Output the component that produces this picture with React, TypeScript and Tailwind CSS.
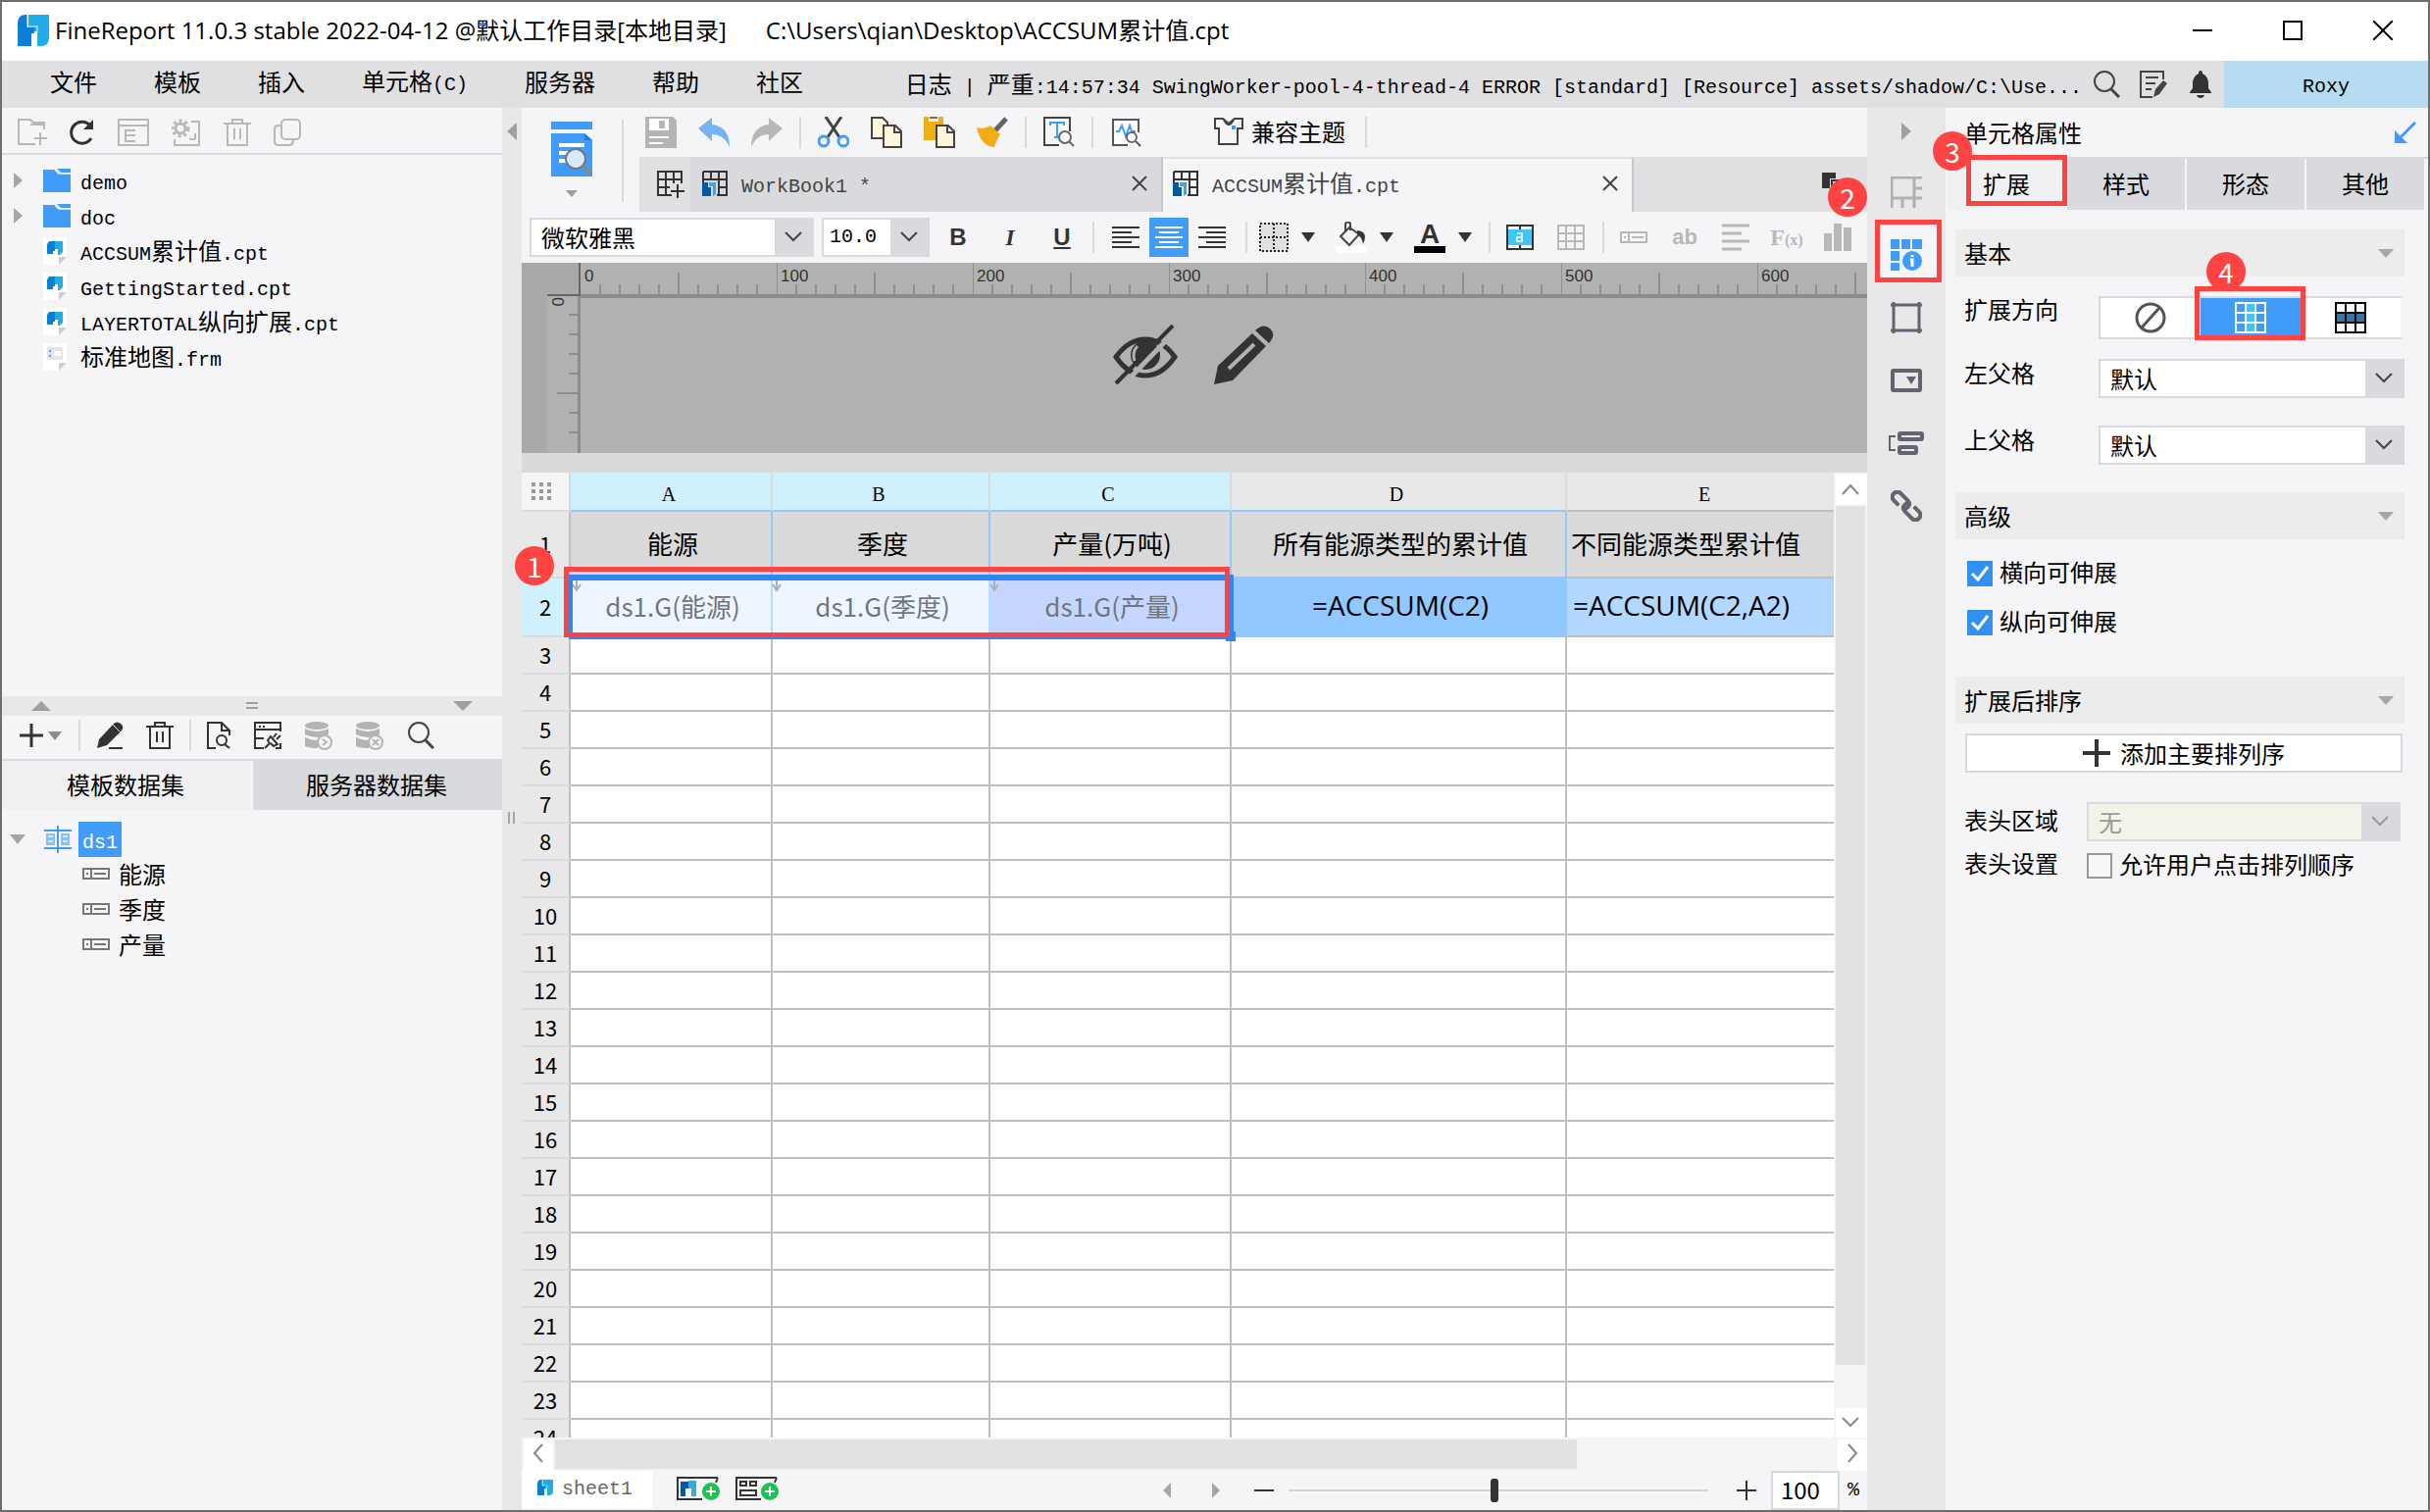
import { ReactNode } from 'react'
import clsx from 'clsx'

type IconProps = { w?: number; h?: number; children?: ReactNode; className?: string }

function Icon({ w = 32, h = 32, children, className }: IconProps) {
  return (
    <svg width={w} height={h} viewBox={`0 0 ${w} ${h}`} fill="none" className={clsx('shrink-0', className)} aria-hidden="true">
      {children}
    </svg>
  )
}

// Latin runs use a half-width monospace next to full-width Chinese
function Mixed({ text }: { text: string }) {
  return (
    <span className="whitespace-pre">
      {text.split(/([\x20-\x7e]+)/).filter(Boolean).map((part, i) =>
        /^[\x20-\x7e]/.test(part) ? (
          <span key={i} className="font-['Liberation_Mono',monospace] text-xl leading-none">{part}</span>
        ) : (
          <span key={i}>{part}</span>
        )
      )}
    </span>
  )
}

function Caret({ className = 'text-[#333]', dir = 'down', w = 14, h = 10 }: { className?: string; dir?: string; w?: number; h?: number }) {
  const points: Record<string, string> = {
    down: `0,0 ${w},0 ${w / 2},${h}`,
    up: `0,${h} ${w},${h} ${w / 2},0`,
    left: `${w},0 ${w},${h} 0,${h / 2}`,
    right: `0,0 0,${h} ${w},${h / 2}`,
  }
  return (
    <Icon w={w} h={h} className={className}>
      <polygon points={points[dir]} fill="currentColor" />
    </Icon>
  )
}

function Chevron({ dir = 'down', className = 'text-[#555]' }: { dir?: string; className?: string }) {
  const d: Record<string, string> = {
    down: 'M2 5L10 13L18 5',
    up: 'M2 15L10 6L18 15',
    left: 'M14 1L6 10L14 19',
    right: 'M6 1L14 10L6 19',
  }
  return (
    <Icon w={20} h={20} className={className}>
      <path d={d[dir]} stroke="currentColor" strokeWidth="2" />
    </Icon>
  )
}

function Sep({ className = 'mx-[17px]' }: { className?: string }) {
  return <span className={clsx('h-8 w-[2px] shrink-0 bg-[#dadadd]', className)} />
}

function Badge({ n, className }: { n: number; className: string }) {
  return (
    <span className={clsx('absolute z-20 flex size-10 items-center justify-center rounded-full bg-[#ff4343] text-[28px] leading-none text-white', className)}>
      {n}
    </span>
  )
}

function Logo({ size = 32 }: { size?: number }) {
  return (
    <svg width={size} height={size} viewBox="0 0 32 32" className="shrink-0" aria-hidden="true">
      <path d="M11 0H32V23Q32 32 24 32H20V17H11Z" fill="#22ace6" />
      <path d="M0 9Q0 0 8 0H10V13H17V19H14V32H0Z" fill="#0b7fd6" />
      <path d="M10 0V12H20V18" stroke="#fff" strokeOpacity="0.6" strokeWidth="1.5" fill="none" />
      <path d="M14 20H20V32H14Z" fill="#fff" />
    </svg>
  )
}

function FolderIcon() {
  return (
    <Icon w={28} h={24}>
      <path d="M0 1H12L15 5H28V24H0Z" fill="#419bf9" />
      <path d="M14 0H28V4H18Z" fill="#419bf9" />
      <path d="M12 1L16 5H28" stroke="#e7f1fd" strokeWidth="1.5" />
    </Icon>
  )
}

function FileIcon({ kind }: { kind: 'cpt' | 'frm' }) {
  return (
    <Icon w={24} h={28}>
      <path d="M0 0H24V20L16 28H0Z" fill="#fff" />
      <path d="M16 28V20H24Z" fill="#cfcfd2" />
      {kind === 'cpt' ? (
        <>
          <path d="M6 4H12V17H4V7Z" fill="#0b7fd6" />
          <path d="M12 4H20V15L17 18H15V12H12Z" fill="#22ace6" />
          <path d="M10 14H13V18H10Z" fill="#fff" />
        </>
      ) : (
        <>
          <rect x="4" y="4" width="16" height="13" fill="#e4e4e6" />
          <path d="M7 7V14" stroke="#419bf9" strokeWidth="2" strokeDasharray="2 3 6" />
          <path d="M11 8H18V13H11Z" fill="#fff" />
        </>
      )}
    </Icon>
  )
}

function FieldIcon({ className = 'text-[#777]' }: { className?: string }) {
  return (
    <Icon w={28} h={12} className={className}>
      <rect x="1" y="1" width="26" height="10" stroke="currentColor" strokeWidth="2" />
      <path d="M9 1V11M12 6H24" stroke="currentColor" strokeWidth="2" />
      <rect x="4" y="5" width="2" height="2" fill="currentColor" />
    </Icon>
  )
}

function TemplateTabIcon() {
  return (
    <Icon w={26} h={26}>
      <path d="M1 1H25V25H15M1 9H25M1 1V12M9 1V9M17 1V25M17 17H25" stroke="#333" strokeWidth="2" />
      <path d="M0 12H6V17H9V26H0Z" fill="#0557a5" />
      <path d="M7 12H14V24L11 26V16H7Z" fill="#36a9e1" />
    </Icon>
  )
}

function SearchIcon() {
  return (
    <Icon w={28} h={28}>
      <circle cx="12" cy="11" r="10" stroke="#444" strokeWidth="2" />
      <path d="M19 19L27 27" stroke="#444" strokeWidth="3" />
    </Icon>
  )
}

function DbIcon({ mark }: { mark: string }) {
  return (
    <Icon w={28} h={30}>
      <ellipse cx="12" cy="5" rx="12" ry="4" fill="#b4b4b4" />
      <path d="M0 8Q12 14 24 8V14Q12 20 0 14ZM0 17Q8 21 15 20L13 28Q4 28 0 26Z" fill="#b4b4b4" />
      <circle cx="20" cy="22" r="7" fill="#f5f5f7" stroke="#b4b4b4" strokeWidth="2" />
      <path d={mark} stroke="#b4b4b4" strokeWidth="2" />
    </Icon>
  )
}

function PencilIcon() {
  return (
    <Icon w={28} h={28}>
      <path d="M0 27L2 18L17 2Q20 -1 24 2T25 9L10 24Z" fill="#333" />
      <path d="M16 3L23 10" stroke="#f5f5f7" strokeWidth="1" />
      <path d="M12 27H26" stroke="#333" strokeWidth="2" />
    </Icon>
  )
}

function TrashIcon({ color = '#333' }: { color?: string }) {
  return (
    <Icon w={28} h={28}>
      <path d="M0 5H28M9 5V1H19V5M4 5V27H24V5M11 10V21M17 10V21" stroke={color} strokeWidth="2" />
    </Icon>
  )
}

function GridIcon({ line, fill, vertical }: { line: string; fill: string; vertical?: boolean }) {
  return (
    <Icon>
      {vertical ? <rect x="11" width="10" height="32" fill={fill} /> : <rect y="11" width="32" height="10" fill={fill} />}
      <path d="M1 1H31V31H1ZM11 1V31M21 1V31M1 11H31M1 21H31" stroke={line} strokeWidth="2" />
    </Icon>
  )
}

function TitleBar() {
  return (
    <header className="flex h-[60px] shrink-0 items-center bg-white pb-[2px] pl-4 font-['Open_Sans','Noto_Sans_CJK_SC',sans-serif]">
      <Logo />
      <h1 className="ml-[6px] text-2xl leading-8">FineReport 11.0.3 stable 2022-04-12 @默认工作目录[本地目录]</h1>
      <span className="ml-10 text-2xl leading-8">C:\Users\qian\Desktop\ACCSUM累计值.cpt</span>
      <div className="ml-auto flex h-full">
        <button aria-label="最小化" className="flex w-[92px] items-center justify-center">
          <Icon w={20} h={20}><path d="M0 10H20" stroke="#000" strokeWidth="2" /></Icon>
        </button>
        <button aria-label="最大化" className="flex w-[92px] items-center justify-center">
          <Icon w={20} h={20}><rect x="1" y="1" width="18" height="18" stroke="#000" strokeWidth="2" /></Icon>
        </button>
        <button aria-label="关闭" className="flex w-[92px] items-center justify-center">
          <Icon w={20} h={20}><path d="M0 0L20 20M20 0L0 20" stroke="#000" strokeWidth="2" /></Icon>
        </button>
      </div>
    </header>
  )
}

const menus = ['文件', '模板', '插入', '单元格(C)', '服务器', '帮助', '社区']

function MenuBar() {
  return (
    <nav className="flex h-12 shrink-0 items-center bg-[#e0e0e2] pl-5">
      {menus.map((item) => (
        <button key={item} className="shrink-0 px-[29px] pb-[6px] text-2xl leading-none"><Mixed text={item} /></button>
      ))}
      <div className="ml-auto min-w-0 overflow-hidden pb-[2px] text-2xl leading-10">
        <Mixed text="日志 | 严重:14:57:34 SwingWorker-pool-4-thread-4 ERROR [standard] [Resource] assets/shadow/C:\Use..." />
      </div>
      <div className="ml-[11px] mr-[10px] flex shrink-0 gap-5">
        <button aria-label="搜索"><SearchIcon /></button>
        <button aria-label="日志">
          <Icon w={28} h={28}>
            <path d="M24 9V1H1V27H13M6 7H19M6 13H16M6 19H12" stroke="#444" strokeWidth="2" />
            <path d="M14 27L16 19L24 10L28 13L20 24Z" fill="#444" />
          </Icon>
        </button>
        <button aria-label="通知">
          <Icon w={28} h={28}>
            <path d="M14 0Q16 0 16 3Q22 6 22 13V18L25 22V23H3V22L6 18V13Q6 6 12 3Q12 0 14 0ZM10 25H18Q17 28 14 28T10 25Z" fill="#333" />
          </Icon>
        </button>
      </div>
      <button className="h-full w-[208px] shrink-0 bg-[#b7dcf2] pb-1 text-2xl"><Mixed text="Roxy" /></button>
    </nav>
  )
}

const files = [
  { name: 'demo', kind: 'folder' },
  { name: 'doc', kind: 'folder' },
  { name: 'ACCSUM累计值.cpt', kind: 'cpt' },
  { name: 'GettingStarted.cpt', kind: 'cpt' },
  { name: 'LAYERTOTAL纵向扩展.cpt', kind: 'cpt' },
  { name: '标准地图.frm', kind: 'frm' },
]

function FilePanel() {
  const gray = '#b8b8b8'
  return (
    <section className="flex h-[600px] shrink-0 flex-col">
      <div className="flex h-12 shrink-0 items-center gap-[23px] border-b-2 border-[#d9dadd] pl-4 pt-1">
        <button aria-label="新建文件夹">
          <Icon w={30} h={28}><path d="M27 11V4H16L13 1H1V26H18M23 14V27M17 20H30M13 6H27" stroke={gray} strokeWidth="2" /></Icon>
        </button>
        <button aria-label="刷新">
          <Icon w={26} h={28}><path d="M21 7A11 11 0 1 0 22 20" stroke="#333" strokeWidth="3" /><path d="M24 1V11H14Z" fill="#333" /></Icon>
        </button>
        <button aria-label="在文件夹中查看">
          <Icon w={32} h={28}><path d="M1 1H31V27H1ZM1 7H31M8 11V23H18M8 12H18M8 17H18" stroke={gray} strokeWidth="2" /></Icon>
        </button>
        <button aria-label="权限">
          <Icon w={30} h={28}>
            <circle cx="9" cy="10" r="5" stroke={gray} strokeWidth="3" />
            <circle cx="9" cy="10" r="8" stroke={gray} strokeWidth="3" strokeDasharray="3 3" />
            <path d="M20 3H28V27H3V21M18 21H24M24 15V21" stroke={gray} strokeWidth="2" />
          </Icon>
        </button>
        <button aria-label="删除"><TrashIcon color={gray} /></button>
        <button aria-label="复制">
          <Icon w={28} h={28}>
            <rect x="8" y="1" width="19" height="20" rx="4" stroke={gray} strokeWidth="2" />
            <path d="M8 7H5Q1 7 1 11V23Q1 27 5 27H16Q20 27 20 22" stroke={gray} strokeWidth="2" />
          </Icon>
        </button>
      </div>
      <ul className="pt-2">
        {files.map((file) => (
          <li key={file.name} className="flex h-9 items-center pl-3 text-2xl leading-none">
            <span className="w-[30px]">{file.kind === 'folder' && <Caret dir="right" w={9} h={16} className="text-[#a6a6a6]" />}</span>
            <span className="flex w-[38px] justify-start">
              {file.kind === 'folder' ? <FolderIcon /> : <FileIcon kind={file.kind as 'cpt' | 'frm'} />}
            </span>
            <Mixed text={file.name} />
          </li>
        ))}
      </ul>
    </section>
  )
}

function DatasetPanel() {
  return (
    <section className="flex min-h-0 flex-1 flex-col">
      <div className="flex h-5 shrink-0 items-center justify-between bg-[#e8e8e8] px-[30px] text-[#a0a0a0]">
        <Caret dir="up" w={20} h={10} className="" />
        <Icon w={12} h={8}><path d="M0 1H12M0 6H12" stroke="#a0a0a0" strokeWidth="2" /></Icon>
        <Caret w={20} h={10} className="" />
      </div>
      <div className="flex h-[44px] shrink-0 items-center pb-1 pl-[18px]">
        <button aria-label="添加数据集" className="flex items-center gap-[5px]">
          <Icon w={24} h={28}><path d="M12 2V26M0 14H24" stroke="#333" strokeWidth="3" /></Icon>
          <Caret className="text-[#8c8c8c]" h={9} />
        </button>
        <Sep />
        <div className="flex gap-[22px]">
          <button aria-label="编辑"><PencilIcon /></button>
          <button aria-label="删除"><TrashIcon /></button>
        </div>
        <Sep className="mx-4" />
        <div className="flex items-center gap-6">
          <button aria-label="预览">
            <Icon w={24} h={28}>
              <path d="M9 27H1V1H15L23 9V14M15 1V9H23" stroke="#333" strokeWidth="2" />
              <circle cx="15" cy="19" r="5" stroke="#333" strokeWidth="2" />
              <path d="M18 23L23 27" stroke="#333" strokeWidth="2" />
            </Icon>
          </button>
          <button aria-label="SQL">
            <Icon w={28} h={28}>
              <path d="M27 10V1H1V27H10M1 8H27M1 17H10M5 5H7M9 5H11" stroke="#333" strokeWidth="2" />
              <path d="M11 27L16 22L14 19L17 15L24 23L20 25L17 22M20 16L23 12M23 18L27 14M22 27H27V22" stroke="#333" strokeWidth="2" />
            </Icon>
          </button>
          <button aria-label="缓存"><DbIcon mark="M18 19L22 22L18 25" /></button>
          <button aria-label="清除缓存"><DbIcon mark="M17 19L23 25M23 19L17 25" /></button>
          <button aria-label="搜索"><SearchIcon /></button>
        </div>
      </div>
      <div className="grid h-[52px] shrink-0 grid-cols-2 gap-[2px] border-t-2 border-[#d9dadd] text-2xl leading-none">
        <button className="bg-[#f0f0f2] pb-[2px] pr-[2px]">模板数据集</button>
        <button className="bg-[#d9dadd] pb-[2px] pr-[2px]">服务器数据集</button>
      </div>
      <ul className="pt-3 text-2xl leading-none">
        <li className="flex h-9 items-center pl-2">
          <Caret className="text-[#a6a6a6]" w={16} />
          <Icon w={28} h={28} className="ml-[19px]">
            <path d="M0 5H28M0 23H28M14 0V28" stroke="#419bf9" strokeWidth="2" />
            <path d="M2 8H11V20H2ZM17 8H26V20H17Z" fill="#419bf9" fillOpacity="0.6" />
            <path d="M4 11H9M4 16H9M19 11H24M19 16H24" stroke="#d7eafe" strokeWidth="2" />
          </Icon>
          <span className="ml-[7px] flex h-9 items-center bg-[#419bf9] px-1 text-white"><Mixed text="ds1" /></span>
        </li>
        {['能源', '季度', '产量'].map((field) => (
          <li key={field} className="flex h-9 items-center gap-[9px] pb-[2px] pl-[82px]">
            <FieldIcon />
            {field}
          </li>
        ))}
      </ul>
    </section>
  )
}

function QuickToolbar() {
  return (
    <div className="flex h-[50px] items-center pl-[6px]">
      <div className="flex gap-[22px]">
        <button aria-label="保存">
          <Icon>
            <path d="M0 0H28L32 4V32H0Z" fill="#b4b4b6" />
            <path d="M4 2H24V14H4ZM4 20H24V22H4ZM4 26H18V28H4Z" fill="#fff" />
            <rect x="14" y="4" width="6" height="8" fill="#b4b4b6" />
          </Icon>
        </button>
        <button aria-label="撤销">
          <Icon><path d="M0 12L14 1V8Q32 10 32 31Q26 18 14 18V25Z" fill="#77b3f2" /></Icon>
        </button>
        <button aria-label="重做">
          <Icon><path d="M32 12L18 1V8Q0 10 0 31Q6 18 18 18V25Z" fill="#b8b8ba" /></Icon>
        </button>
      </div>
      <Sep />
      <div className="flex gap-[22px]">
        <button aria-label="剪切">
          <Icon>
            <path d="M8 0L22 21M24 0L10 21" stroke="#444" strokeWidth="3" />
            <circle cx="6" cy="25" r="5" stroke="#419bf9" strokeWidth="3" />
            <circle cx="26" cy="25" r="5" stroke="#419bf9" strokeWidth="3" />
          </Icon>
        </button>
        <button aria-label="复制">
          <Icon>
            <path d="M1 1H12L17 6V22H1Z" fill="#fff4dc" stroke="#444" strokeWidth="2" />
            <path d="M13 9H25L31 15V31H13Z" fill="#fff4dc" stroke="#444" strokeWidth="2" />
            <path d="M24 9V16H31" stroke="#444" strokeWidth="2" />
          </Icon>
        </button>
        <button aria-label="粘贴">
          <Icon>
            <path d="M0 0H20V24H0Z" fill="#f0ad15" />
            <path d="M5 0H15V5H5Z" fill="#fff" />
            <path d="M6 0H14V2H6Z" fill="#c65a11" />
            <path d="M13 9H25L31 15V31H13Z" fill="#fff4dc" stroke="#444" strokeWidth="2" />
            <path d="M24 9V16H31" stroke="#444" strokeWidth="2" />
          </Icon>
        </button>
        <button aria-label="格式刷">
          <Icon>
            <path d="M30 2L19 14" stroke="#5f6270" strokeWidth="5" />
            <path d="M0 11Q8 13 14 9L24 18Q20 24 18 31Q4 30 0 11Z" fill="#f0ad15" />
          </Icon>
        </button>
      </div>
      <Sep />
      <button aria-label="全文检索">
        <Icon>
          <path d="M16 29H1V1H27V15" stroke="#444" strokeWidth="2" />
          <path d="M7 9V6H21V9M14 6V21M11 21H17" stroke="#419bf9" strokeWidth="2" />
          <circle cx="22" cy="21" r="6" stroke="#666" strokeWidth="2" />
          <path d="M26 25L31 30" stroke="#666" strokeWidth="2" />
        </Icon>
      </button>
      <Sep />
      <button aria-label="性能分析">
        <Icon>
          <path d="M3 3H29V29H3Z" fill="#fff" />
          <path d="M18 29H3V3H29V16" stroke="#555" strokeWidth="2" />
          <path d="M6 15H9L12 9L16 20L20 9L22 15H26" stroke="#419bf9" strokeWidth="2" />
          <circle cx="22" cy="21" r="5" fill="#fff" stroke="#666" strokeWidth="2" />
          <path d="M26 25L31 30" stroke="#555" strokeWidth="2" />
        </Icon>
      </button>
      <button className="ml-[74px] flex items-center gap-2 pb-[2px] text-2xl leading-none">
        <Icon w={30} h={28}>
          <path d="M1 1H9L15 6L21 1H29V11H24V27H5V11H1Z" stroke="#444" strokeWidth="2" />
          <path d="M10 2Q15 12 20 2" stroke="#444" strokeWidth="2" />
          <rect x="18" y="8" width="4" height="4" fill="#419bf9" />
        </Icon>
        兼容主题
      </button>
      <Sep className="ml-5" />
    </div>
  )
}

function CloseIcon() {
  return (
    <Icon w={16} h={16}><path d="M1 1L15 15M15 1L1 15" stroke="#444" strokeWidth="2" /></Icon>
  )
}

function TemplateTabs() {
  return (
    <div className="relative flex h-14 bg-[#e0e0e2] text-2xl leading-none text-[#444]">
      <button aria-label="新建模板" className="flex w-[52px] shrink-0 items-center justify-end pr-[6px]">
        <Icon w={28} h={28}>
          <path d="M15 25H1V1H25V13M1 9H25M1 17H13M9 1V25M17 1V13M21 14V28M14 21H28" stroke="#333" strokeWidth="2" />
        </Icon>
      </button>
      <div className="flex w-[482px] items-center border-r-2 border-[#c6c7ca] bg-[#d9dadd] pb-[2px] pl-3 pr-[14px]">
        <button className="flex items-center gap-[14px]"><TemplateTabIcon /><Mixed text="WorkBook1 *" /></button>
        <button aria-label="关闭 WorkBook1" className="ml-auto"><CloseIcon /></button>
      </div>
      <div className="flex w-[480px] items-center border-r-2 border-t-2 border-[#c6c7ca] border-t-[#e0e0e2] bg-[#f5f5f7] pb-1 pl-[10px] pr-[14px]">
        <button className="flex items-center gap-[14px]"><TemplateTabIcon /><Mixed text="ACCSUM累计值.cpt" /></button>
        <button aria-label="关闭 ACCSUM" className="ml-auto"><CloseIcon /></button>
      </div>
      <button aria-label="窗口列表" className="ml-auto mr-[22px]">
        <Icon w={24} h={24}><path d="M0 0H14V6H8V16H0Z" fill="#333" /><path d="M10 8H24V24H10Z" stroke="#333" strokeWidth="2" /></Icon>
      </button>
      <Badge n={2} className="right-0 top-[21px]" />
    </div>
  )
}

type ComboProps = { id: string; label: string; value: string; className: string; disabled?: boolean; mono?: boolean }

function Combo({ id, label, value, className, disabled, mono }: ComboProps) {
  return (
    <div className={clsx('flex h-10 shrink-0 border-2 border-[#d9dadd] leading-none', disabled ? 'bg-[#f3f3ea]' : 'bg-white', className)}>
      <select
        id={id}
        aria-label={label}
        disabled={disabled}
        className={clsx(
          'min-w-0 flex-1 appearance-none bg-transparent',
          mono ? "pl-[6px] font-['Liberation_Mono',monospace] text-xl" : 'pl-[10px] text-2xl leading-none',
          disabled ? 'text-[#999]' : 'text-black'
        )}
      >
        <option>{value}</option>
      </select>
      <span className="flex w-[38px] items-center justify-center bg-[#d9dadd]">
        <Chevron className={disabled ? 'text-[#999]' : 'text-[#444]'} />
      </span>
    </div>
  )
}

function FormatBar() {
  return (
    <div className="flex h-[52px] shrink-0 items-center bg-[#f5f5f7] pl-2">
      <Combo id="font-family" label="字体" value="微软雅黑" className="w-[290px]" />
      <Combo id="font-size" label="字号" value="10.0" mono className="ml-2 w-[110px]" />
      <div className="ml-[13px] flex gap-[21px] text-2xl leading-none text-[#333]">
        <button className="w-8 font-['Liberation_Sans',sans-serif] font-bold">B</button>
        <button className="w-8 font-['Liberation_Serif',serif] font-bold italic">I</button>
        <button className="w-8 font-['Liberation_Sans',sans-serif] font-bold underline">U</button>
      </div>
      <Sep className="ml-[15px] mr-3" />
      <div className="flex gap-1">
        <button aria-label="左对齐" className="flex size-10 items-center justify-center">
          <Icon w={28} h={22}><path d="M0 1H28M0 6H20M0 11H28M0 16H20M0 21H28" stroke="#333" strokeWidth="2" /></Icon>
        </button>
        <button aria-label="居中" className="flex size-10 items-center justify-center bg-[#419bf9]">
          <Icon w={28} h={22}><path d="M0 1H28M4 6H24M0 11H28M4 16H24M0 21H28" stroke="#fff" strokeWidth="2" /></Icon>
        </button>
        <button aria-label="右对齐" className="flex size-10 items-center justify-center">
          <Icon w={28} h={22}><path d="M0 1H28M8 6H28M0 11H28M8 16H28M0 21H28" stroke="#333" strokeWidth="2" /></Icon>
        </button>
      </div>
      <Sep className="ml-[14px] mr-3" />
      <div className="flex gap-[21px]">
        <button aria-label="边框" className="flex items-center gap-[13px]">
          <Icon w={30} h={30}>
            <rect width="30" height="30" fill="#e0e0e2" />
            <path d="M1 1H29V29H1ZM15 1V29M1 15H29" stroke="#222" strokeWidth="2" strokeDasharray="2 2" />
          </Icon>
          <Caret />
        </button>
        <button aria-label="背景" className="flex items-center gap-[13px]">
          <Icon>
            <path d="M5 15L14 6L24 13L14 24Z" stroke="#444" strokeWidth="2" />
            <path d="M10 10V2Q13 -1 15 2V9" stroke="#444" strokeWidth="2" />
            <path d="M22 9Q34 10 28 23Q27 16 22 13Z" fill="#333" />
            <rect y="25" width="32" height="7" fill="#fff" />
          </Icon>
          <Caret />
        </button>
        <button aria-label="文字颜色" className="flex items-center gap-[13px]">
          <span className="flex w-8 flex-col items-center font-['Liberation_Sans',sans-serif] text-[28px] font-bold leading-6 text-[#333]">
            A
            <span className="h-[7px] w-8 bg-black" />
          </span>
          <Caret />
        </button>
      </div>
      <Sep className="ml-[17px] mr-4" />
      <div className="flex gap-6">
        <button aria-label="合并单元格">
          <Icon w={28} h={26}>
            <path d="M1 1H27V25H1ZM14 1V5M14 21V25" stroke="#333" strokeWidth="2" />
            <rect x="2" y="5" width="24" height="16" fill="#3fc4fb" />
            <path d="M11 9H16V17M17 17H11V13H16" stroke="#d9f3ff" strokeWidth="2" />
          </Icon>
        </button>
        <button aria-label="拆分单元格">
          <Icon w={28} h={26}><path d="M1 1H27V25H1ZM9 1V25M18 1V25M1 9H27M1 17H27" stroke="#b8b8ba" strokeWidth="2" /></Icon>
        </button>
      </div>
      <Sep className="ml-[18px] mr-4" />
      <div className="flex items-center gap-6 text-[#b8b8ba]">
        <button aria-label="数据列"><FieldIcon className="text-[#b8b8ba]" /></button>
        <button className="w-7 font-['Liberation_Sans',sans-serif] text-[22px] font-bold leading-none">ab</button>
        <button aria-label="富文本">
          <Icon w={28} h={28}><path d="M0 2H28M0 10H20M0 18H28M0 26H20" stroke="currentColor" strokeWidth="3" /></Icon>
        </button>
        <button className="flex w-7 items-baseline justify-center font-['Liberation_Serif',serif] text-2xl font-bold leading-none">
          F<span className="text-base leading-none">(x)</span>
        </button>
        <button aria-label="图表">
          <Icon w={28} h={28}><path d="M0 10H8V28H0ZM10 0H18V28H10ZM20 4H28V28H20Z" fill="currentColor" /></Icon>
        </button>
      </div>
    </div>
  )
}

const rulerMarks = [0, 100, 200, 300, 400, 500, 600]
const minorTicks = [20, 40, 60, 80, 120, 140, 160, 180]

function ParameterPane() {
  return (
    <div className="flex h-[194px] shrink-0 bg-[#b1b1b1] font-['Liberation_Sans',sans-serif] text-base leading-none text-[#444]">
      <div className="w-[26px] shrink-0 bg-[#a9a9a9]" />
      <div className="flex w-[34px] shrink-0 flex-col">
        <div className="h-[34px] border-b-2 border-r-2 border-[#666] bg-[#a9a9a9]" />
        <div className="flex-1 border-r-[3px] border-[#8c8c8c]">
          <svg width="31" height="160" viewBox="0 0 31 160" aria-hidden="true">
            <path d="M22 19H31M22 39H31M22 59H31M22 79H31M10 99H31M22 119H31M22 139H31" stroke="#8f8f8f" strokeWidth="2" />
            <text x="0" y="0" transform="translate(5 1) rotate(90)" fontSize="17" fill="#333">0</text>
          </svg>
        </div>
      </div>
      <div className="flex min-w-0 flex-1 flex-col">
        <div className="flex h-9 overflow-hidden border-b-4 border-[#8c8c8c]">
          {rulerMarks.map((mark) => (
            <svg key={mark} width="200" height="32" viewBox="0 0 200 32" className="shrink-0" aria-hidden="true">
              {mark > 0 && <path d="M0 0V32" stroke="#8f8f8f" strokeWidth="2" />}
              <path d={`M100 10V32${minorTicks.map((x) => `M${x} 22V32`).join('')}`} stroke="#8f8f8f" strokeWidth="2" />
              <text x="4" y="19" fontSize="17" fill="#333">{mark}</text>
            </svg>
          ))}
        </div>
        <div className="flex justify-center gap-9 pr-[62px] pt-[27px]">
          <button aria-label="隐藏参数面板">
            <Icon w={66} h={62}>
              <path d="M3 33Q16 15 33 15T63 33Q50 52 33 52T3 33Z" stroke="#333" strokeWidth="5" />
              <circle cx="33" cy="31" r="15" fill="#333" />
              <path d="M25 22Q19 28 22 37" stroke="#b1b1b1" strokeWidth="3" />
              <path d="M65 5L9 63" stroke="#b1b1b1" strokeWidth="5" />
              <path d="M61 1L3 60" stroke="#333" strokeWidth="4" />
            </Icon>
          </button>
          <button aria-label="编辑参数面板">
            <Icon w={62} h={62}>
              <path d="M1 61L5 42L40 9L54 22L20 57Z" fill="#333" />
              <path d="M43 6Q51 -2 58 4T57 19Z" fill="#333" />
              <path d="M16 45L42 20" stroke="#b1b1b1" strokeWidth="4" />
            </Icon>
          </button>
        </div>
      </div>
    </div>
  )
}

const columns = ['A', 'B', 'C', 'D', 'E']
const blankRows = Array.from({ length: 22 }, (_, i) => i + 3)
const line = 'border-b-2 border-r-2 border-[#bfbfbf] last:border-r-0'
const picked = 'border-b-2 border-r-2 border-[#94c8fd]'
const rowHead = 'border-b-2 border-r-2 border-b-[#d9dadd] border-r-[#bfbfbf] p-0 pb-[2px] text-center align-middle text-[22px] font-normal leading-none'

function ReportGrid() {
  return (
    <div className="relative min-h-0 min-w-0 flex-1 bg-white">
      <div className="h-full overflow-hidden">
        <table className="w-full table-fixed border-separate border-spacing-0 text-[26px] leading-none">
          <colgroup>
            <col className="w-[50px]" />
            <col className="w-[206px]" />
            <col className="w-[222px]" />
            <col className="w-[246px]" />
            <col className="w-[342px]" />
            <col />
          </colgroup>
          <thead>
            <tr className="h-10">
              <th className="border-b-2 border-r-2 border-[#d9dadd] bg-[#f5f5f7] p-0 pr-2">
                <Icon w={20} h={18} className="mx-auto">
                  <path d="M2 0V4M10 0V4M18 0V4M2 7V11M10 7V11M18 7V11M2 14V18M10 14V18M18 14V18" stroke="#999" strokeWidth="4" />
                </Icon>
              </th>
              {columns.map((col, i) => (
                <th
                  key={col}
                  className={clsx(
                    "border-b-2 border-r-2 border-r-[#d9dadd] p-0 pr-1 pt-[6px] align-middle font-['Liberation_Serif',serif] text-xl font-normal leading-none last:border-r-0 last:pl-2 last:pr-0",
                    i < 3 ? 'bg-[#cff0fc]' : 'bg-[#e8e8e8]',
                    i < 4 ? 'border-b-[#94c8fd]' : 'border-b-[#bfbfbf]'
                  )}
                >
                  {col}
                </th>
              ))}
            </tr>
          </thead>
          <tbody>
            <tr className="h-[68px] bg-[#d9d9d9] text-center">
              <th className={clsx(rowHead, 'bg-[#e8e8e8]')}>1</th>
              <td className={clsx(picked, 'p-0 pb-[2px] pl-1')}>能源</td>
              <td className={clsx(picked, 'p-0 pb-[2px] pl-1')}>季度</td>
              <td className={clsx(picked, 'p-0 pb-[2px] pl-1')}>产量(万吨)</td>
              <td className={clsx(picked, 'p-0 pb-[2px] pl-1')}>所有能源类型的累计值</td>
              <td className={clsx(line, 'p-0 pb-[2px] pl-1 text-left')}>不同能源类型累计值</td>
            </tr>
            <tr className="h-[60px] text-center">
              <th className={clsx(rowHead, 'bg-[#cff0fc]')}>2</th>
              {['能源', '季度', '产量'].map((field) => (
                <td
                  key={field}
                  className={clsx('border-b-2 border-r-2 border-[#b5dcff] p-0 pb-[2px] pl-1 text-[#70757e]', field === '产量' ? 'bg-[#c5d6ff]' : 'bg-[#edf6ff]')}
                >
                  ds1.G({field})
                </td>
              ))}
              <td className="border-b-2 border-r-2 border-[#90c8ff] bg-[#90c8ff] p-0 pb-1 pl-1 font-['Open_Sans',sans-serif] text-[28px] leading-none">=ACCSUM(C2)</td>
              <td className={clsx(line, "bg-[#b3d8ff] p-0 pb-1 pl-[6px] text-left font-['Open_Sans',sans-serif] text-[28px] leading-none")}>=ACCSUM(C2,A2)</td>
            </tr>
            {blankRows.map((n) => (
              <tr key={n} className="h-[38px]">
                <th className={clsx(rowHead, 'bg-[#e8e8e8]')}>{n}</th>
                {columns.map((col) => <td key={col} className={clsx(line, 'p-0')} />)}
              </tr>
            ))}
          </tbody>
        </table>
      </div>
      {/* selected range with its expand arrows and the fill handle */}
      <div className="absolute left-12 top-[104px] h-[66px] w-[678px] border-4 border-t-[6px] border-[#3285f2]">
        <Icon w={460} h={12}>
          <path d="M4 0V10M0 4L4 10L8 4M208 0V10M204 4L208 10L212 4M430 0V10M426 4L430 10L434 4" stroke="#a9b2bb" strokeWidth="2" />
        </Icon>
      </div>
      <span className="absolute left-[718px] top-[162px] size-[10px] bg-[#3285f2]" />
      <div className="absolute left-[43px] top-24 h-[72px] w-[679px] border-[5px] border-[#ff4343]" />
      <Badge n={1} className="-left-[7px] top-[75px]" />
    </div>
  )
}

function BottomBar() {
  return (
    <footer className="flex h-10 shrink-0 items-center bg-[#f5f5f7]">
      <button className="mb-[2px] flex h-[38px] w-[134px] items-center gap-[9px] self-start bg-white pb-1 pl-4 text-[#666]">
        <Logo size={16} />
        <Mixed text="sheet1" />
      </button>
      <div className="ml-6 flex gap-4 pb-1">
        {['sheet', 'block'].map((kind) => (
          <button key={kind} aria-label={kind === 'sheet' ? '添加 sheet' : '添加聚合块'}>
            <Icon w={44} h={24}>
              <path d="M42 1H1V23H26M42 1L40 6" stroke="#333" strokeWidth="2" />
              {kind === 'sheet' ? (
                <>
                  <path d="M4 5H12V12H9V20H4Z" fill="#0557a5" />
                  <path d="M12 4H20V20H15V12H12Z" fill="#36a9e1" />
                </>
              ) : (
                <path d="M5 5H11V9H5ZM15 5H21V9H15ZM5 14H21V19H5Z" stroke="#333" strokeWidth="2" />
              )}
              <circle cx="35" cy="15" r="9" fill="#1fc152" />
              <path d="M35 10V20M30 15H40" stroke="#fff" strokeWidth="2" />
            </Icon>
          </button>
        ))}
      </div>
      <div className="ml-auto flex items-center pr-2">
        <button aria-label="上一页"><Caret dir="left" w={8} h={16} className="text-[#a6a6a6]" /></button>
        <button aria-label="下一页" className="ml-[42px]"><Caret dir="right" w={8} h={16} className="text-[#a6a6a6]" /></button>
        <button aria-label="缩小" className="ml-[35px]"><Icon w={20} h={20}><path d="M0 10H20" stroke="#333" strokeWidth="2" /></Icon></button>
        <input
          type="range"
          aria-label="缩放"
          defaultValue={49}
          className="mx-[15px] h-6 w-[428px] appearance-none bg-[linear-gradient(#d5d5d8,#d5d5d8)] bg-[length:100%_2px] bg-center bg-no-repeat [&::-webkit-slider-thumb]:h-6 [&::-webkit-slider-thumb]:w-2 [&::-webkit-slider-thumb]:appearance-none [&::-webkit-slider-thumb]:rounded-[3px] [&::-webkit-slider-thumb]:bg-[#333]"
        />
        <button aria-label="放大" className="ml-[14px]"><Icon w={20} h={20}><path d="M0 10H20M10 0V20" stroke="#333" strokeWidth="2" /></Icon></button>
        <input aria-label="缩放比例" defaultValue="100" className="ml-[15px] h-10 w-[70px] border-2 border-[#d9dadd] bg-white pb-1 pl-2 text-2xl leading-none" />
        <span className="ml-2 pb-1"><Mixed text="%" /></span>
      </div>
    </footer>
  )
}

function Workspace() {
  return (
    <main className="flex min-w-0 flex-1 flex-col bg-[#f5f5f7]">
      <div className="flex h-[106px] shrink-0">
        <div className="flex w-[104px] shrink-0 py-3">
          <button aria-label="预览" className="ml-[30px] flex w-[42px] flex-col items-center gap-[14px] pt-[2px]">
            <Icon w={42} h={56}>
              <path d="M0 0H42V8H0ZM0 12H34L42 19V56H0Z" fill="#419bf9" />
              <path d="M34 12V19H42Z" fill="#1f7fe0" />
              <path d="M8 24H34M8 32H26M8 40H22" stroke="#fff" strokeWidth="4" />
              <circle cx="25" cy="38" r="10" fill="#d8eafd" stroke="#777" strokeWidth="2" />
              <path d="M32 45L40 53" stroke="#888" strokeWidth="4" />
            </Icon>
            <Caret w={12} h={7} className="text-[#a0a0a0]" />
          </button>
          <span className="ml-auto h-[84px] w-[2px] bg-[#dadadd]" />
        </div>
        <div className="flex min-w-0 flex-1 flex-col pl-4">
          <QuickToolbar />
          <TemplateTabs />
        </div>
      </div>
      <FormatBar />
      <ParameterPane />
      <div className="h-5 shrink-0 bg-[#dadadc]" />
      <div className="flex min-h-0 flex-1">
        <ReportGrid />
        <div className="flex w-[34px] shrink-0 flex-col pl-[2px] pt-[2px]">
          <button aria-label="向上滚动" className="flex h-[30px] items-center justify-center bg-white pr-[2px]"><Chevron dir="up" className="text-[#888]" /></button>
          <div className="mb-11 mr-[2px] mt-[2px] flex-1 bg-[#e1e1e1]" />
          <button aria-label="向下滚动" className="flex h-[30px] items-center justify-center bg-white pr-[2px]"><Chevron className="text-[#888]" /></button>
        </div>
      </div>
      <div className="flex h-[34px] shrink-0 pl-[2px] pt-[2px]">
        <button aria-label="向左滚动" className="flex w-[30px] items-center justify-center bg-white pb-1"><Chevron dir="left" className="text-[#888]" /></button>
        <div className="mb-[2px] ml-[2px] mr-[266px] flex-1 bg-[#e1e1e1]" />
        <button aria-label="向右滚动" className="flex w-[30px] items-center justify-center bg-white pb-1"><Chevron dir="right" className="text-[#888]" /></button>
      </div>
      <BottomBar />
    </main>
  )
}

function SideStrip() {
  const slate = '#62656f'
  const item = 'flex h-16 w-full items-center justify-center'
  return (
    <aside className="w-20 shrink-0 bg-[#e8e8e8]">
      <button aria-label="收起" className="mb-[6px] flex h-12 w-full items-center justify-center">
        <Caret dir="right" w={10} h={18} className="text-[#a0a0a0]" />
      </button>
      <button aria-label="单元格元素" className={item}>
        <Icon><path d="M1 32V1H32M24 2V32M1 22H32M12 22V32M24 12H32" stroke="#b0b0b0" strokeWidth="3" /></Icon>
      </button>
      <button aria-label="单元格属性" className={clsx(item, 'relative')}>
        <span className="absolute -top-1 left-2 flex h-16 w-[68px] border-[5px] border-[#ff4343] bg-[#f5f5f7]" />
        <Icon className="relative">
          <path d="M0 0H9V10H0ZM11 0H20V10H11ZM22 0H32V10H22ZM0 12H9V22H0ZM0 24H9V32H0Z" fill="#419bf9" />
          <circle cx="22" cy="22" r="10" fill="#419bf9" />
          <path d="M22 16V18M20 21H22V28" stroke="#fff" strokeWidth="3" />
        </Icon>
      </button>
      <button aria-label="悬浮元素" className={item}>
        <Icon><path d="M3 0V32M29 0V32M0 3H32M0 29H32" stroke={slate} strokeWidth="3" /></Icon>
      </button>
      <button aria-label="控件设置" className={item}>
        <Icon h={24}>
          <rect x="2" y="2" width="28" height="20" rx="1" stroke={slate} strokeWidth="4" />
          <path d="M16 8H26L21 16Z" fill={slate} />
        </Icon>
      </button>
      <button aria-label="条件属性" className={item}>
        <Icon w={36} h={24}>
          <rect x="11" y="2" width="23" height="6" rx="1" stroke={slate} strokeWidth="4" />
          <rect x="11" y="16" width="17" height="6" rx="1" stroke={slate} strokeWidth="4" />
          <path d="M7 5H1V19H7" stroke={slate} strokeWidth="2" />
        </Icon>
      </button>
      <button aria-label="超级链接" className={item}>
        <Icon>
          <g transform="rotate(45 16 16)" stroke={slate} strokeWidth="4">
            <path d="M10 21H3Q-2 21 -2 16T3 11H13Q18 11 18 16Q18 18 17 20" />
            <path d="M22 11H29Q34 11 34 16T29 21H19Q14 21 14 16Q14 14 15 12" />
          </g>
        </Icon>
      </button>
    </aside>
  )
}

function SectionHead({ title, className }: { title: string; className: string }) {
  return (
    <button className={clsx('ml-[10px] mr-6 flex h-12 items-center justify-between bg-[#ececec] pl-[9px] pr-[11px]', className)}>
      {title}
      <Caret w={16} h={9} className="text-[#a6a6a6]" />
    </button>
  )
}

function Check({ id, label, checked }: { id: string; label: string; checked?: boolean }) {
  return (
    <label htmlFor={id} className="flex h-[26px] items-center gap-[7px]">
      <span className="grid">
        <input
          id={id}
          type="checkbox"
          defaultChecked={checked}
          className="peer col-start-1 row-start-1 size-[26px] appearance-none border-2 border-[#999] bg-[#f8f8f9] checked:border-[#3291ee] checked:bg-[#3291ee]"
        />
        <Icon w={26} h={26} className="pointer-events-none invisible col-start-1 row-start-1 peer-checked:visible">
          <path d="M5 13L11 19L21 6" stroke="#fff" strokeWidth="3" />
        </Icon>
      </span>
      <span className="pb-1">{label}</span>
    </label>
  )
}

function PropertyPanel() {
  return (
    <aside className="relative flex w-[492px] shrink-0 flex-col bg-[#f5f5f7] text-2xl leading-none">
      <Badge n={3} className="-left-[13px] top-6" />
      <div className="flex h-[50px] items-center justify-between pl-[19px] pr-3">
        <h2>单元格属性</h2>
        <button aria-label="弹出">
          <Icon w={22} h={22}><path d="M21 1L5 17" stroke="#419bf9" strokeWidth="3" /><path d="M0 9L13 22H0Z" fill="#419bf9" /></Icon>
        </button>
      </div>
      <div className="grid h-[54px] grid-cols-4 gap-[2px] border-t-2 border-[#d9dadd] pl-[2px] pr-1">
        <button className="relative bg-[#f0f0f2] pb-[2px]">
          扩展
          <span className="absolute -right-[2px] -top-1 h-[52px] w-[103px] border-[5px] border-[#ff4343]" />
        </button>
        <button className="bg-[#d9dadd] pb-[2px]">样式</button>
        <button className="bg-[#d9dadd] pb-[2px]">形态</button>
        <button className="bg-[#d9dadd] pb-[2px]">其他</button>
      </div>

      <SectionHead title="基本" className="mt-5" />
      <div className="mt-5 flex items-start pl-[19px] pr-6">
        <span className="flex h-7 w-[137px] items-center pb-[2px]">扩展方向</span>
        <div className="relative grid h-11 flex-1 grid-cols-3 border-2 border-r-4 border-[#d9dadd] border-r-[#f5f5f7] bg-white">
          <button aria-label="不扩展" className="flex items-center justify-center">
            <Icon><circle cx="16" cy="16" r="14" stroke="#555" strokeWidth="3" /><path d="M25 6L7 26" stroke="#555" strokeWidth="3" /></Icon>
          </button>
          <button aria-label="纵向" className="flex items-center justify-center bg-[#419bf9]">
            <GridIcon line="#fff" fill="#3fc4fb" vertical />
          </button>
          <button aria-label="横向" className="flex items-center justify-center">
            <GridIcon line="#000" fill="#3476a8" />
          </button>
          <span className="absolute -top-3 left-24 h-[55px] w-[113px] border-[5px] border-[#ff4343]" />
          <Badge n={4} className="-top-[47px] left-[108px]" />
        </div>
      </div>
      <div className="mt-5 flex items-start pl-[19px] pr-6">
        <label htmlFor="left-parent" className="flex h-7 w-[137px] items-center">左父格</label>
        <Combo id="left-parent" label="左父格" value="默认" className="flex-1" />
      </div>
      <div className="mt-7 flex items-start pl-[19px] pr-6">
        <label htmlFor="top-parent" className="flex h-7 w-[137px] items-center">上父格</label>
        <Combo id="top-parent" label="上父格" value="默认" className="flex-1" />
      </div>

      <SectionHead title="高级" className="mt-7" />
      <div className="mt-[22px] flex flex-col gap-6 pl-[22px]">
        <Check id="stretch-x" label="横向可伸展" checked />
        <Check id="stretch-y" label="纵向可伸展" checked />
      </div>

      <SectionHead title="扩展后排序" className="mt-[42px]" />
      <button className="ml-5 mr-[26px] mt-[10px] flex h-10 items-center justify-center gap-[10px] border-2 border-[#d9dadd] bg-white">
        <Icon w={28} h={28}><path d="M14 0V28M0 14H28" stroke="#333" strokeWidth="4" /></Icon>
        添加主要排列序
      </button>
      <div className="mt-[30px] flex items-center pl-[19px] pr-7">
        <label htmlFor="header-area" className="w-[125px] pb-1">表头区域</label>
        <Combo id="header-area" label="表头区域" value="无" className="flex-1" disabled />
      </div>
      <div className="mt-[10px] flex items-center pl-[19px]">
        <span className="w-[125px] pb-[6px]">表头设置</span>
        <Check id="click-sort" label="允许用户点击排列顺序" />
      </div>
    </aside>
  )
}

export default function App() {
  return (
    <div className="flex h-screen w-full flex-col overflow-hidden border-2 border-[#6d6d70] bg-[#f5f5f7] font-['Noto_Sans_CJK_SC',sans-serif] text-black">
      <TitleBar />
      <MenuBar />
      <div className="flex min-h-0 flex-1">
        <aside className="flex w-[510px] shrink-0 flex-col">
          <FilePanel />
          <DatasetPanel />
        </aside>
        <div className="flex w-5 shrink-0 flex-col items-center justify-between bg-[#e8e8e8] pt-[15px]">
          <button aria-label="收起"><Caret dir="left" w={10} h={18} className="text-[#a0a0a0]" /></button>
          <Icon w={8} h={12} className="mb-[700px]"><path d="M1 0V12M6 0V12" stroke="#a6a6a6" strokeWidth="2" /></Icon>
        </div>
        <Workspace />
        <SideStrip />
        <PropertyPanel />
      </div>
    </div>
  )
}
